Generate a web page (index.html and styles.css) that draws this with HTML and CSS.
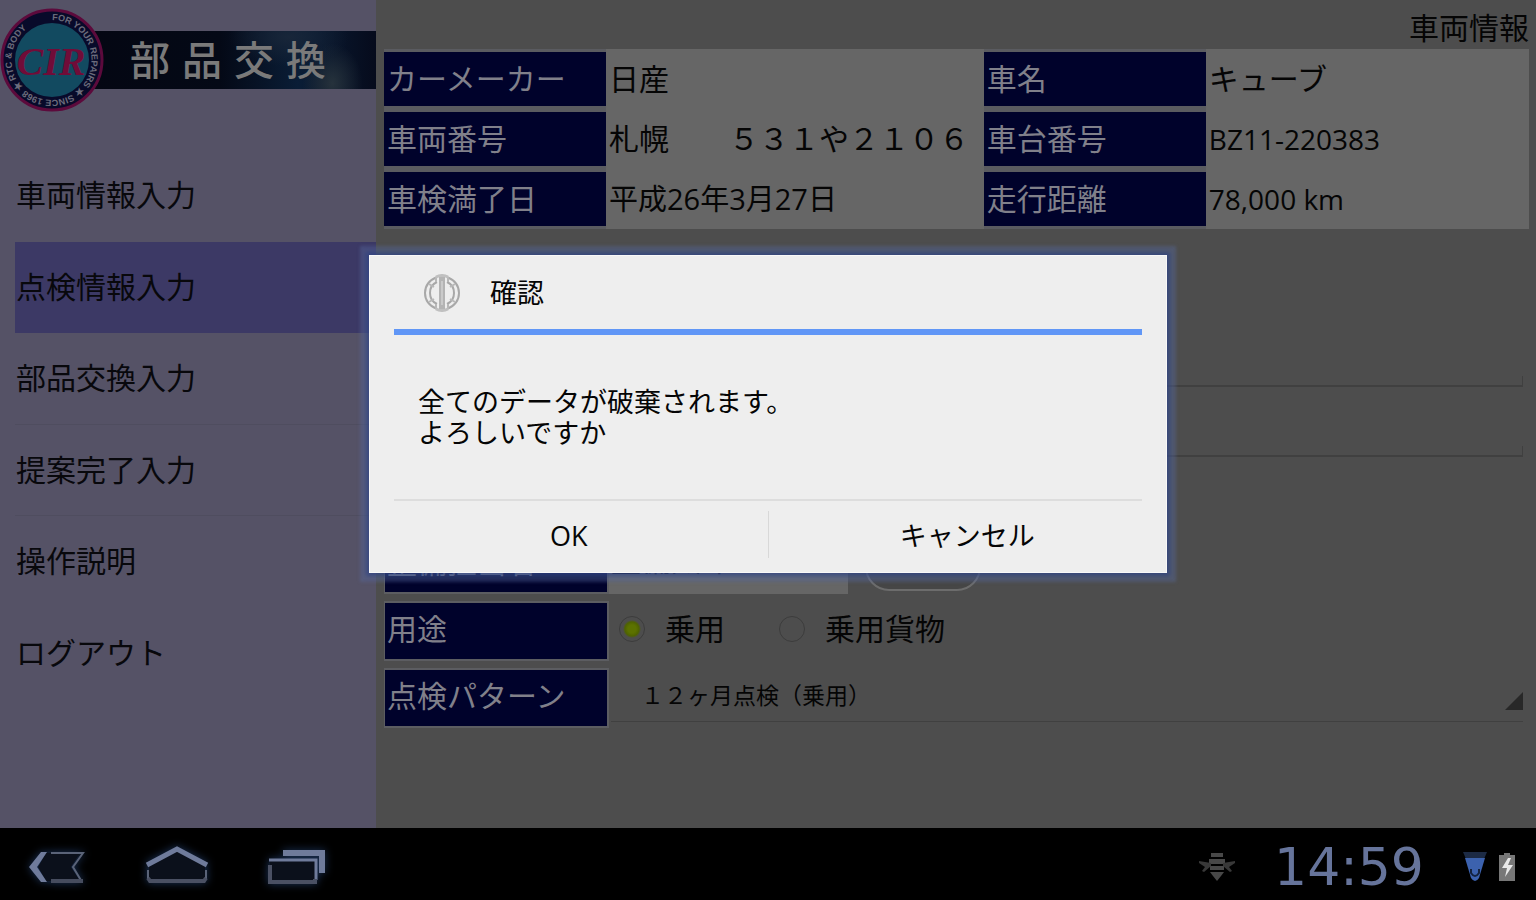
FILE: index.html
```html
<!DOCTYPE html>
<html lang="ja">
<head>
	<meta charset="utf-8">
	<title>部品交換</title>
	<link rel="stylesheet" href="styles.css">
</head>
<body>

	<div id="app">
		<div id="sidebar">
			<div class="brand">
				<svg class="logo" width="104" height="104" viewBox="0 0 104 104">
					<defs>
						<path id="ring" d="M52 12 A40 40 0 1 1 51 12" />
					</defs>
					<circle cx="52" cy="52" r="50" fill="#080a2a" stroke="#5c0a3c" stroke-width="3" />
					<circle cx="52" cy="52" r="37" fill="#124a60" />
					<text font-family="Liberation Sans" font-weight="bold" font-size="9" fill="#6c6c7c"><textPath href="#ring">FOR YOUR REPAIRS ★ SINCE 1968 ★ RTC &amp; BODY</textPath></text>
					<text x="51" y="67" text-anchor="middle" font-family="Liberation Serif" font-style="italic" font-weight="bold" font-size="40" fill="#700c38">CIR</text>
				</svg>
				<h1>部品交換</h1>
			</div>
			<nav class="menu">
				<a href="#">車両情報入力</a>
				<a href="#" class="selected">点検情報入力</a>
				<a href="#" class="line">部品交換入力</a>
				<a href="#" class="line">提案完了入力</a>
				<a href="#">操作説明</a>
				<a href="#">ログアウト</a>
			</nav>
		</div>

		<div id="content">
			<h2>車両情報</h2>
			<table class="car">
				<colgroup><col class="head"><col class="wide"><col class="head"><col></colgroup>
				<tr>
					<th>カーメーカー</th><td>日産</td>
					<th>車名</th><td>キューブ</td>
				</tr>
				<tr>
					<th>車両番号</th><td>札幌　　５３１や２１０６</td>
					<th>車台番号</th><td class="latin">BZ11-220383</td>
				</tr>
				<tr>
					<th>車検満了日</th><td class="date">平成26年3月27日</td>
					<th>走行距離</th><td class="latin">78,000 km</td>
				</tr>
			</table>

			<div class="inputs">
				<input type="text" aria-label="入力1">
				<input type="text" aria-label="入力2">
			</div>

			<form class="rows">
				<div class="row">
					<span class="label">整備担当者</span>
					<span class="value">整備太郎</span>
					<button type="button" class="pick" aria-label="選択"></button>
				</div>
				<div class="row">
					<span class="label">用途</span>
					<label class="radio"><input type="radio" name="use" checked>乗用</label>
					<label class="radio"><input type="radio" name="use">乗用貨物</label>
				</div>
				<div class="row">
					<label class="label" for="pattern">点検パターン</label>
					<span class="spinner">
						<select id="pattern">
							<option>１２ヶ月点検（乗用）</option>
						</select>
					</span>
				</div>
			</form>
		</div>

		<div id="confirm" role="dialog" aria-labelledby="confirm-title">
			<div class="title">
				<svg width="38" height="38" viewBox="0 0 38 38" fill="none">
					<path d="M14 3Q2 8 2 19t12 16M24 3q12 5 12 16T24 35" stroke="#a8a8a8" stroke-width="2" />
					<path d="M14 8Q7 11 7 19t7 11M24 8q7 3 7 11t-7 11" stroke="#a8a8a8" stroke-width="2" />
					<path d="M6 10l5 3M6 28l5-3M32 10l-5 3M32 28l-5-3M13 3v5M25 3v5M13 30v5M25 30v5" stroke="#b8b8b8" stroke-width="2" />
					<path d="M13 3q6-3 12 0M13 35q6 3 12 0" stroke="#c0c0c0" stroke-width="3" />
					<path d="M19 3v32" stroke="#b4b4b4" stroke-width="6" />
					<path d="M19 7v24" stroke="#cacaca" stroke-width="2" />
				</svg>
				<span id="confirm-title">確認</span>
			</div>
			<p>全てのデータが破棄されます。<br>よろしいですか</p>
			<div class="buttons">
				<button type="button">OK</button>
				<button type="button">キャンセル</button>
			</div>
		</div>
	</div>

	<div id="navbar">
		<button type="button" aria-label="戻る">
			<svg width="64" height="44" viewBox="0 0 64 44" fill="none">
				<path d="M21 8h34l-9 14 9 14H21L13 22z" fill="#0b101b" />
				<path d="M22 7H16L4 22l12 15h6L12 22z" fill="#6f7b9b" />
				<path d="M26 8h32l-10 14 9 15" stroke="#5a6378" stroke-width="2" />
				<path d="M26 36h32" stroke="#464c5e" stroke-width="4" />
			</svg>
		</button>
		<button type="button" aria-label="ホーム">
			<svg width="64" height="44" viewBox="0 0 64 44" fill="none">
				<path d="M4 18L32 6l28 12v18H4z" fill="#0b101b" />
				<path d="M2 20L32 4l30 16" stroke="#6f7b9b" stroke-width="5" />
				<path d="M3 25v9M61 25v9" stroke="#5a6378" stroke-width="2" />
				<path d="M3 33l2 3h54l2-3" stroke="#4a5063" stroke-width="4" />
			</svg>
		</button>
		<button type="button" aria-label="履歴">
			<svg width="64" height="44" viewBox="0 0 64 44" fill="none">
				<path d="M18 5h42v23h-6V11H18z" fill="#6f7b9b" />
				<rect x="5" y="15" width="46" height="22" fill="#0b101b" />
				<path d="M4 15h47v20" stroke="#6f7b9b" stroke-width="3" />
				<path d="M5 20v17h45v-3" stroke="#4a5063" stroke-width="4" />
			</svg>
		</button>

		<div class="status">
			<svg width="36" height="30" viewBox="0 0 36 30" fill="#484848">
				<path d="M12 1h12v4H12zM10 7h16v5H10zM11 14h14v4H11zM11 20h14l-3 4-4 5-4-5z" />
				<path d="M0 9l12 2v3L5 20l-2-1 3-4-6-4zM36 9l-12 2v3l7 6 2-1-3-4 6-4z" fill="#383838" />
			</svg>
			<span class="clock">14:59</span>
			<svg width="24" height="30" viewBox="0 0 24 30">
				<path d="M0 0h24l-3 7H3z" fill="#1c2a44" />
				<path d="M2 6h20l-6 20q-4 6-8 0z" fill="#3c62ae" />
				<path d="M8 17v4q4 6 8 0v-4" fill="none" stroke="#14233f" stroke-width="2" />
			</svg>
			<svg width="16" height="28" viewBox="0 0 16 28">
				<path d="M5 0h6v2h5v26H0V2h5z" fill="#777" />
				<path d="M9 5L3 15h5l-2 9 8-12H9l3-7z" fill="#e8e8e8" />
			</svg>
		</div>
	</div>

</body>
</html>
```

FILE: styles.css
```css
* { box-sizing: border-box; }

body {
	display: flex;
	flex-direction: column;
	margin: 0;
	min-height: 100vh;
	background: #4d4d4d;
	color: #050505;
	font-family: "Open Sans", "Noto Sans CJK JP", sans-serif;
	font-size: 30px;
	line-height: 40px;
}

button, input, select {
	margin: 0;
	padding: 0;
	border: 0;
	background: none;
	color: inherit;
	font: inherit;
}

h1, h2, p { margin: 0; font-weight: normal; }

#app {
	position: relative;
	display: flex;
	flex: 1;
}

/* left menu */
#sidebar {
	width: 376px;
	background: #555266;
}

.brand {
	display: flex;
	align-items: center;
	height: 120px;
}

.logo { position: relative; z-index: 1; }

.brand h1 {
	flex: 1;
	height: 58px;
	margin-left: -40px;
	padding-left: 66px;
	background:
		radial-gradient(ellipse 30px 40px at 86% 90%, #26323c, transparent),
		radial-gradient(ellipse 60px 30px at 72% 10%, #182639, transparent),
		linear-gradient(90deg, #040612, #040916 50%, #0a1d36 75%, #060b1c);
	color: #7a7a7a;
	font-size: 40px;
	font-weight: 500;
	line-height: 58px;
	letter-spacing: 12px;
	white-space: nowrap;
}

.menu {
	display: grid;
	grid-auto-rows: 1fr;
	height: 549px;
	margin: 30px 0 0 15px;
}

.menu a {
	display: flex;
	align-items: center;
	padding-left: 1px;
	border-bottom: 1px solid transparent;
	color: #08080c;
	text-decoration: none;
}

.menu .selected { background: #3c3965; }
.menu .line { border-color: #4f4d5f; }

/* right side */
#content {
	flex: 1;
	padding: 0 7px 0 8px;
}

h2 {
	padding: 8px 0 1px;
	font-size: 30px;
	text-align: right;
}

.car {
	width: 100%;
	table-layout: fixed;
	border-spacing: 0;
	background: #666;
}

.car .head { width: 222px; }
.car .wide { width: 33%; }
.car tr { height: 60px; }

.car th, .car td {
	padding: 0 3px;
	text-align: left;
	font-weight: normal;
	white-space: nowrap;
}

.car th {
	border: solid #5a5b60;
	border-width: 3px 0;
	background: #00022b;
	color: #80808a;
}

.car .latin { font-size: 28px; }
.car .date { font-size: 29px; }

.inputs {
	display: flex;
	flex-direction: column;
	gap: 20px;
	margin: 108px 6px 77px 0;
}

.inputs input {
	height: 50px;
	border-bottom: 2px solid #404040;
	border-right: 1px solid #444;
	/* only the foot of the side line shows */
	border-image: linear-gradient(transparent 78%, #404040 78%) 2;
}

.rows {
	display: flex;
	flex-direction: column;
	gap: 7px;
}

.row {
	display: flex;
	align-items: center;
	height: 60px;
}

.label {
	width: 225px;
	height: 60px;
	padding-left: 2px;
	border: 2px solid #5c5d61;
	border-left-width: 1px;
	background: #00022b;
	color: #80808a;
	line-height: 52px;
}

.value {
	width: 239px;
	height: 60px;
	padding-left: 2px;
	background: #666;
	line-height: 52px;
}

.pick {
	width: 116px;
	height: 54px;
	margin-left: 17px;
	border: 2px solid #6c6c6c;
	border-radius: 24px;
	background: #464646;
}

.radio {
	display: flex;
	align-items: center;
	gap: 20px;
	margin: 0 44px 4px 10px;
}

.radio input {
	appearance: none;
	width: 26px;
	height: 26px;
	border: 1px solid #3c3c3c;
	border-radius: 50%;
}

.radio input:checked {
	background: radial-gradient(circle, #5c7200 4px, #4f6300 7px, transparent 9px);
}

.spinner {
	position: relative;
	flex: 1;
	height: 54px;
	margin: 0 6px 6px 2px;
	border-bottom: 1px solid #404040;
}

.spinner::after {
	content: "";
	position: absolute;
	right: 0;
	bottom: 11px;
	border: solid transparent;
	border-width: 9px;
	border-right-color: #282828;
	border-bottom-color: #282828;
}

.spinner select {
	appearance: none;
	width: 100%;
	height: 53px;
	padding-left: 30px;
	font-size: 23px;
}

/* confirm dialog */
#confirm {
	position: absolute;
	top: 50%;
	left: 50%;
	width: 798px;
	transform: translate(-50%, -50%);
	border: 1px solid #f8f8f8;
	background: #eee;
	box-shadow: 0 0 4px 3px rgba(40, 62, 130, 0.6), 0 0 3px 9px rgba(88, 108, 160, 0.4);
	font-size: 27px;
}

#confirm .title {
	display: flex;
	align-items: center;
	gap: 29px;
	height: 79px;
	margin: 0 24px;
	padding-left: 29px;
	border-bottom: 6px solid #6096f6;
}

#confirm p {
	padding: 51px 48px;
	line-height: 31px;
}

#confirm .buttons {
	display: flex;
	position: relative;
	height: 73px;
}

#confirm .buttons::before {
	content: "";
	position: absolute;
	top: 0;
	left: 24px;
	right: 24px;
	border-top: 2px solid #ddd;
}

#confirm button { flex: 1; }

#confirm button + button {
	border-left: 1px solid;
	border-image: linear-gradient(transparent 18%, #d8d8d8 18%, #d8d8d8 80%, transparent 80%) 1;
}

/* system bar */
#navbar {
	display: flex;
	align-items: center;
	gap: 56px;
	height: 72px;
	padding: 6px 21px 0 25px;
	background: #000;
}

#navbar button, #navbar svg { display: block; }
#navbar button svg { filter: drop-shadow(0 0 4px #1c3358); }

.status {
	display: flex;
	align-items: center;
	gap: 12px;
	margin-left: auto;
}

.clock {
	width: 204px;
	color: #66749b;
	font-family: "DejaVu Sans", sans-serif;
	font-size: 52px;
	text-align: center;
}
```
